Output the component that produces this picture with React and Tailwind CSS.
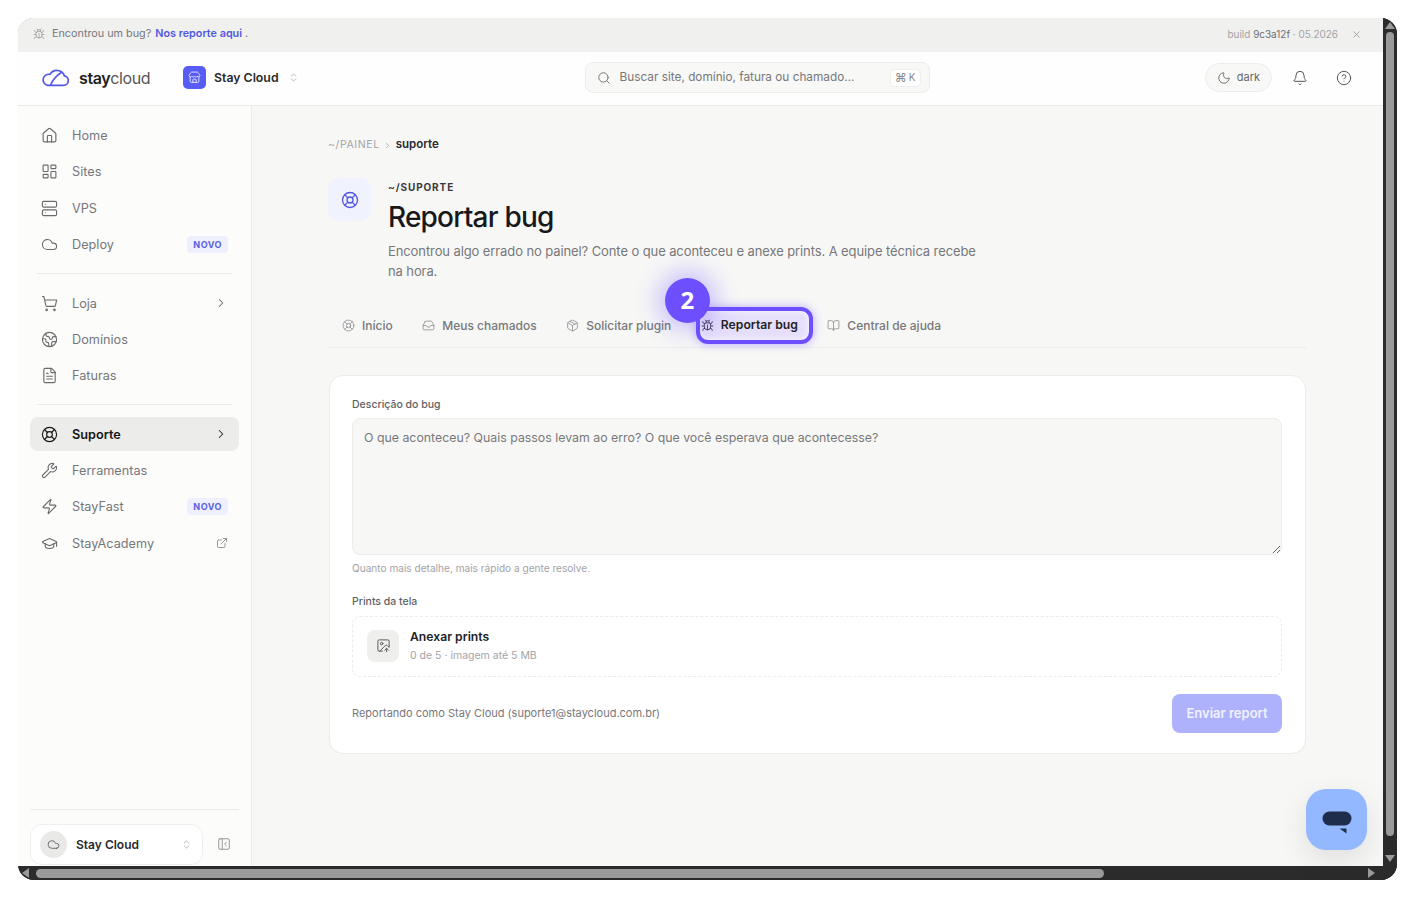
import React from "react";
import {
  House, LayoutDashboard, Server, Cloud, ShoppingCart, Earth, FileText, LifeBuoy, Wrench, Zap, GraduationCap,
  ExternalLink, ChevronRight, ChevronsUpDown, Bug, Search, Moon, Bell, CircleHelp, X, Inbox, Package, BookOpen,
  ImageUp, PanelLeftClose, Store,
} from "lucide-react";

const Item = ({ icon: I, label, active, chevron, badge, ext }) => (
  <div className={`flex h-[34px] shrink-0 items-center rounded-lg pl-[11px] pr-[11px] text-[12.7px] ${active ? "bg-[#ececeb] font-semibold text-[#171717]" : "text-[#77777a]"}`}>
    <I size={17} strokeWidth={1.6} className={`mr-[14px] shrink-0 ${active ? "text-[#171717]" : "text-[#6b6b6e]"}`} />
    <span className="flex-1">{label}</span>
    {chevron && <ChevronRight size={14} strokeWidth={1.75} className={active ? "text-[#262626]" : "text-[#6b6b6e]"} />}
    {badge && <span className="rounded-[4px] bg-[#eef0fe] px-[6px] py-[2px] text-[9px] leading-[13px] font-bold tracking-[0.5px] text-[#5b5fe0]">NOVO</span>}
    {ext && <ExternalLink size={12} strokeWidth={1.5} className="text-[#77777a]" />}
  </div>
);

const Tab = ({ icon: I, label, active }) => (
  <div className={`relative flex h-[37px] items-center gap-[7px] pr-[15.5px] pl-[14px] ${active ? "text-[12.2px] font-semibold text-[#1f1f24]" : "text-[12px] font-medium text-[#77777a]"}`}>
    {active && (
      <span className="absolute top-0 right-0 bottom-0 left-[9px] rounded-xl border-[4px] border-[#6d4fff] bg-[#e6dffb] shadow-[0_0_10px_rgba(109,79,255,0.45),inset_0_0_6px_rgba(255,255,255,0.9)]" />
    )}
    <I size={13} strokeWidth={1.5} className={`relative shrink-0 ${active ? "text-[#2a2a30]" : "text-[#8f8f92]"}`} />
    <span className="relative">{label}</span>
    {active && (
      <span className="absolute top-[-29px] left-[-22px] flex h-[45px] w-[45px] items-center justify-center rounded-full bg-[#6d4fff] pb-[2px] text-[24px] font-bold text-white shadow-[0_0_22px_8px_rgba(109,79,255,0.3)] [font-family:'Open_Sans',sans-serif]">2</span>
    )}
  </div>
);

const Logo = () => (
  <svg width="30" height="18" viewBox="0 0 30 18" fill="none" stroke="#5458e8" strokeWidth="1.7" strokeLinecap="round" strokeLinejoin="round">
    <path d="M7.5 16.4H23.5a4.8 4.8 0 0 0 1-9.5A8 8 0 0 0 10 5.4a5.6 5.6 0 1 0-2.5 11Z" />
    <path d="M10.5 16c2-4.5 6-9.500 10.500-12.300" />
  </svg>
);

export default function App() {
  return (
    <div className="h-[898px] w-[1415px] overflow-hidden bg-white p-[18px] pb-[18px] [font-family:Inter,sans-serif]">
      <div className="flex h-[862px] w-[1379px] flex-col overflow-hidden rounded-[16px] bg-[#2b2b2b]">
        <div className="flex min-h-0 flex-1">
          <div className="relative flex w-[1365px] flex-col bg-[#f7f7f6]">
            <div className="flex h-[34px] shrink-0 items-center bg-[#f0f0ef] pr-[21px] pb-[2px] pl-[15px] text-[10.8px] text-[#77777a]">
              <Bug size={12} strokeWidth={1.5} className="mr-[7px] text-[#9a9a9c]" />
              <span>Encontrou um bug?</span>
              <span className="ml-[4px] font-semibold text-[#5458e0]">Nos reporte aqui</span>
              <span className="ml-[3px]">.</span>
              <span className="ml-auto text-[9.95px] text-[#a3a3a6]">build <span className="text-[#6f6f72]">9c3a12f</span> · 05.2026</span>
              <X size={11} strokeWidth={1.5} className="ml-[13px] text-[#8a8a8d]" />
            </div>
            <div className="flex h-[54px] shrink-0 items-center border-b border-[#ebebea] bg-[#fefefe] pr-[31px] pb-[2px] pl-[22px]">
              <Logo />
              <div className="ml-[9px] w-[86px] text-[16px] tracking-[-0.4px] text-[#555558]">
                <span className="font-semibold text-[#1d1d22]">stay</span>cloud
              </div>
              <div className="ml-[18px] flex h-[23px] w-[23px] items-center justify-center rounded-[5px] bg-[#575cf5]">
                <Store size={13} strokeWidth={1.75} className="text-[#e4e6ff]" />
              </div>
              <span className="ml-[8px] pt-px text-[12.3px] font-semibold text-[#2a2a2e]">Stay Cloud</span>
              <ChevronsUpDown size={11} strokeWidth={1.5} className="ml-[9px] text-[#9a9a9c]" />
              <div className="ml-[286px] flex h-[31px] w-[345px] items-center rounded-lg border border-[#ececeb] bg-[#f8f8f7] pr-[8px] pl-[11px] text-[11.8px] text-[#77777a]">
                <Search size={14} strokeWidth={1.5} className="mr-[9px] text-[#66666a]" />
                <span>Buscar site, domínio, fatura ou chamado...</span>
                <span className="ml-auto flex h-[18px] items-center gap-[2px] rounded-[4px] border border-[#eeeeed] bg-white px-[4px] text-[10px] text-[#8a8a8d]"><span className="text-[12px]">⌘</span>K</span>
              </div>
              <div className="ml-auto flex h-[29px] w-[67px] items-center justify-center gap-[6px] rounded-full border border-[#ececeb] bg-[#f8f8f7] text-[11px] text-[#66666a]">
                <Moon size={14} strokeWidth={1.5} />
                dark
              </div>
              <Bell size={16} strokeWidth={1.5} className="ml-[20px] text-[#55555a]" />
              <CircleHelp size={16} strokeWidth={1.5} className="ml-[28px] text-[#55555a]" />
            </div>
            <div className="flex min-h-0 flex-1">
              <aside className="flex w-[234px] shrink-0 flex-col overflow-hidden border-r border-[#ebebea] bg-[#fcfcfb] px-[12px] pt-[12.6px]">
                <nav className="flex flex-1 flex-col gap-[2.3px]">
                  <Item icon={House} label="Home" />
                  <Item icon={LayoutDashboard} label="Sites" />
                  <Item icon={Server} label="VPS" />
                  <Item icon={Cloud} label="Deploy" badge />
                  <div className="mx-[7px] my-[9.5px] h-px shrink-0 bg-[#ebebea]" />
                  <Item icon={ShoppingCart} label="Loja" chevron />
                  <Item icon={Earth} label="Domínios" />
                  <Item icon={FileText} label="Faturas" />
                  <div className="mx-[7px] my-[9.5px] h-px shrink-0 bg-[#ebebea]" />
                  <Item icon={LifeBuoy} label="Suporte" active chevron />
                  <Item icon={Wrench} label="Ferramentas" />
                  <Item icon={Zap} label="StayFast" badge />
                  <Item icon={GraduationCap} label="StayAcademy" ext />
                </nav>
                <div className="flex h-[57px] shrink-0 items-start border-t border-[#ebebea] pt-[14px]">
                  <div className="flex h-[41px] w-[173px] shrink-0 items-center rounded-xl border border-[#efefee] bg-white pr-[10px] pl-[9px] text-[12px] font-semibold text-[#2a2a2e]">
                    <span className="mr-[9px] flex h-[27px] w-[27px] items-center justify-center rounded-full bg-[#e9e9e8]">
                      <Cloud size={13} strokeWidth={1.5} className="text-[#55555a]" />
                    </span>
                    Stay Cloud
                    <ChevronsUpDown size={11} strokeWidth={1.5} className="ml-auto text-[#9a9a9c]" />
                  </div>
                  <PanelLeftClose size={14} strokeWidth={1.5} className="mt-[13px] ml-[14px] text-[#8a8a8d]" />
                </div>
              </aside>
              <main className="min-w-0 flex-1 pt-[31px] pr-[77px] pl-[76px]">
                <div className="flex h-[16px] items-center text-[10.5px]">
                  <span className="tracking-[0.6px] text-[#a3a3a6]">~/PAINEL</span>
                  <ChevronRight size={9} className="mx-[3px] text-[#a3a3a6]" />
                  <span className="ml-[1px] text-[11.5px] font-semibold text-[#2a2a2e]">suporte</span>
                </div>
                <div className="mt-[25px] flex">
                  <div className="flex h-[43px] w-[43px] shrink-0 items-center justify-center rounded-[10px] bg-[#f0f2fd]">
                    <LifeBuoy size={18} strokeWidth={1.75} className="text-[#5458e0]" />
                  </div>
                  <div className="ml-[17px]">
                    <div className="mt-[1px] text-[10px] leading-[16px] font-bold tracking-[0.9px] text-[#3a3a3e]">~/SUPORTE</div>
                    <h1 className="mt-[4px] text-[28px] leading-[36px] font-medium tracking-[-0.8px] text-[#18181b]">Reportar bug</h1>
                    <p className="mt-[6px] w-[600px] text-[13px] leading-[20px] tracking-[-0.1px] text-[#77777a]">Encontrou algo errado no painel? Conte o que aconteceu e anexe prints. A equipe técnica recebe na hora.</p>
                  </div>
                </div>
                <div className="mt-[26px] flex h-[41px] items-start border-b border-[#ececeb]">
                  <Tab icon={LifeBuoy} label="Início" />
                  <Tab icon={Inbox} label="Meus chamados" />
                  <Tab icon={Package} label="Solicitar plugin" />
                  <Tab icon={Bug} label="Reportar bug" active />
                  <Tab icon={BookOpen} label="Central de ajuda" />
                </div>
                <section className="mt-[27px] ml-px h-[379px] rounded-[14px] border border-[#ececeb] bg-white pt-[21px] pr-[23px] pl-[22px]">
                  <div className="text-[10.5px] leading-[16px] font-medium text-[#5f5f63]">Descrição do bug</div>
                  <textarea
                    className="mt-[5px] block h-[137px] w-full resize-y rounded-lg border border-[#ececeb] bg-[#f7f7f6] px-[11px] py-[11px] text-[12.35px] leading-[16px] outline-none placeholder:text-[#77777a]"
                    placeholder="O que aconteceu? Quais passos levam ao erro? O que você esperava que acontecesse?"
                  />
                  <div className="mt-[5px] text-[10.1px] leading-[16px] text-[#a3a3a6]">Quanto mais detalhe, mais rápido a gente resolve.</div>
                  <div className="mt-[18px] text-[10.5px] leading-[16px] font-medium text-[#5f5f63]">Prints da tela</div>
                  <div className="mt-[6px] flex h-[61px] items-center rounded-lg border border-dashed border-[#ececeb] pb-[2px] pl-[14px]">
                    <span className="flex h-[32px] w-[32px] items-center justify-center rounded-lg bg-[#efefee]">
                      <ImageUp size={15} strokeWidth={1.5} className="text-[#55555a]" />
                    </span>
                    <div className="ml-[11px]">
                      <div className="text-[12.2px] leading-[18px] font-semibold text-[#222226]">Anexar prints</div>
                      <div className="mt-[2px] text-[10.5px] leading-[16px] text-[#a3a3a6]">0 de 5 · imagem até 5 MB</div>
                    </div>
                  </div>
                  <div className="mt-[17px] flex items-center justify-between">
                    <span className="text-[11px] text-[#77777a]">Reportando como Stay Cloud (suporte1@staycloud.com.br)</span>
                    <span className="flex h-[39px] w-[110px] items-center justify-center rounded-lg bg-[#aeb1fb] text-[13px] font-semibold text-[#f1f1ff]">Enviar report</span>
                  </div>
                </section>
              </main>
            </div>
            <div className="absolute top-[771px] left-[1288px] flex h-[61px] w-[61px] items-center justify-center rounded-[20px] bg-[#94b8ff] shadow-[0_10px_30px_rgba(0,0,0,0.1)]">
              <svg width="30" height="30" viewBox="0 0 30 30" fill="#1e2d4b">
                <rect x="0.5" y="6.5" width="29" height="14" rx="7" />
                <path d="M17.5 23.5h7v5Z" />
              </svg>
            </div>
          </div>
          <div className="flex w-[14px] flex-col items-center bg-[#2b2b2b] pt-[4px]">
            <span className="h-0 w-0 border-x-[5px] border-b-[7px] border-x-transparent border-b-[#9a9a9a]" />
            <span className="mt-[3px] w-[8px] flex-1 rounded-full bg-[#9a9a9a]" />
            <span className="mt-[19px] mb-[4px] h-0 w-0 border-x-[5px] border-t-[7px] border-x-transparent border-t-[#9a9a9a]" />
          </div>
        </div>
        <div className="flex h-[14px] shrink-0 items-center bg-[#2b2b2b] pr-[22px] pl-[4px]">
          <span className="h-0 w-0 border-y-[5px] border-r-[7px] border-y-transparent border-r-[#9a9a9a]" />
          <span className="ml-[7px] h-[9px] w-[1068px] rounded-full bg-[#9a9a9a]" />
          <span className="ml-auto h-0 w-0 border-y-[5px] border-l-[7px] border-y-transparent border-l-[#9a9a9a]" />
        </div>
      </div>
    </div>
  );
}
